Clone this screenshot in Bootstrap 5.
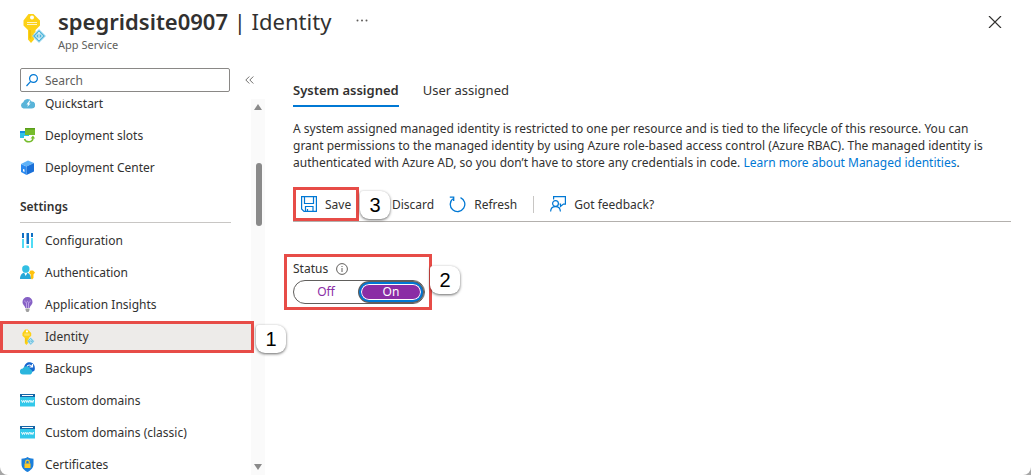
<!DOCTYPE html>
<html lang="en">
<head>
<meta charset="utf-8">
<meta name="viewport" content="width=device-width, initial-scale=1">
<title>spegridsite0907 | Identity</title>
<link href="https://cdn.jsdelivr.net/npm/bootstrap@5.3.0/dist/css/bootstrap.min.css" rel="stylesheet">
<script src="https://cdn.jsdelivr.net/npm/bootstrap@5.3.0/dist/js/bootstrap.bundle.min.js"></script>
<style>
  html { background: #a6a6a6; }
  body { font-family: "Noto Sans", "Open Sans", sans-serif; font-size: 12px; line-height: 17px; color: #323130; background: transparent; }
  svg { display: block; flex: none; }
  .blade { height: 100vh; background: #fff; border-radius: 0 0 8px 8px; overflow: hidden; }
  .blade-head { padding: 8px 29px 0 20px; height: 69px; }
  .blade-head h1 { font-size: 22px; line-height: 26px; font-weight: 400; }
  .blade-head h1 b { font-weight: 600; }
  .kind { font-size: 11px; line-height: 21px; color: #605e5c; }
  .plain { border: 0; background: none; padding: 0; color: inherit; }
  .more { margin: 8px 0 0 23px; }
  .side { width: 265px; flex: none; }
  .lower { min-height: 0; }
  .search-row { padding: 0 11px 0 20px; height: 31px; background: #fff; position: relative; z-index: 1; }
  .search-box { width: 210px; height: 24px; border: 1px solid #8a8886; border-radius: 2px; padding: 0 5px; gap: 7px; }
  .search-box input { border: 0; outline: 0; padding: 0; min-width: 0; flex: 1; color: #323130; }
  .search-box input::placeholder { color: #605e5c; opacity: 1; }
  .menu { min-width: 0; }
  .menu ul { list-style: none; margin: 0; padding: 0; }
  .menu ul:first-child { margin-top: -11px; }
  .menu a { display: flex; align-items: center; gap: 10px; height: 32px; padding-left: 20px; color: inherit; text-decoration: none; position: relative; }
  .menu a.active { background: #edebe9; }
  .menu h2 { font-size: 12px; line-height: 17px; font-weight: 600; margin: 14px 20px 2px 20px; padding-bottom: 7px; border-bottom: 1px solid #c8c6c4; }
  .track { width: 14px; background: #fafafa; padding: 5px 0 5px; }
  .thumb { width: 6px; height: 63px; border-radius: 3px; background: #8a8a8a; margin: 53px 0 auto 1px; }
  .content-pane { padding: 11px 20px 0 28px; min-width: 0; }
  .tab-strip { gap: 24px; border: 0; }
  .tab-strip button { font-size: 13px; padding: 2px 0 5px; line-height: 17px; border-bottom: 2px solid transparent; height: 28px; }
  .tab-strip button.active { font-weight: 600; border-color: #0078d4; }
  .about { margin: 13px 0 0; }
  .about a { color: #0078d4; text-decoration: none; }
  .tools { height: 35px; margin-top: 16px; border-bottom: 1px solid #b3b0ad; }
  .tools button { display: flex; align-items: center; gap: 8px; height: 34px; position: relative; }
  .save { width: 66px; padding-left: 8px; }
  .discard { margin-left: 11px; padding-left: 22px; }
  .refresh { margin-left: 15px; }
  .rule { width: 1px; height: 17px; background: #c8c6c4; margin: 0 16px; }
  .hilite::before { content: ""; position: absolute; inset: 0; border: 3px solid #e74c47; pointer-events: none; }
  .menu .hilite::before { inset: 0 -3px 0 0; }
  .callout-no { position: absolute; width: 30px; height: 28px; background: #fff; border-radius: 3px 9px 9px 9px; box-shadow: 0 1px 3px rgba(0,0,0,.6); font: 20px/28px "Liberation Sans", Arial, sans-serif; text-align: center; color: #000; z-index: 2; }
  .callout-one { left: 256px; top: 4px; }
  .callout-two { left: 146px; top: 12px; }
  .callout-three { left: 67px; top: 4px; }
  .status { position: relative; width: 148px; height: 56px; margin: 32px 0 0 -9px; padding: 6px 7px 0 9px; border: 0; }
  .status legend { float: none; width: auto; font-size: 12px; line-height: 17px; margin: 0; }
  .switch-pill { width: 132px; height: 24px; margin-top: 3px; border: 1px solid #605e5c; border-radius: 12px; }
  .switch-pill label { flex: 1; text-align: center; line-height: 18px; color: #8a2da5; border-radius: 10px; margin: 1px; border: 1px solid transparent; cursor: pointer; }
  .switch-pill input:checked + label { background: #8a2da5; color: #fff; border: 2px solid #0078d4; box-shadow: inset 0 0 0 1px #fff, 0 0 0 1px #605e5c; line-height: 16px; }
</style>
</head>
<body>
<svg width="0" height="0" class="position-absolute" aria-hidden="true">
  <defs>
    <symbol id="key" viewBox="0 0 26 30">
      <path fill="#fcd116" d="M8.500 1h5L20 7.500v5L15.500 17v2l-2 2 2 2-2 2 1 1-3.500 4L8 26.500V17L3.500 12.500v-5z"/>
      <path fill="#e8b400" d="M9.500 17h1v9l-1-1z"/><circle cx="12" cy="4.500" r="2" fill="#fff"/>
      <path stroke="#fff" stroke-opacity=".75" d="M7 9.500h10M7 11.500h10"/>
      <path fill="#50b5d9" stroke="#b5e3f5" d="M19 16.500l6.500 6.500-6.500 6.500-6.500-6.500z"/>
      <path fill="none" stroke="#fff" d="M19 19v8M15.500 23l3.500-3.500 3.500 3.500-3.500 3.500z"/>
    </symbol>
    <symbol id="www" viewBox="0 0 15 13">
      <path fill="#32c8ea" d="M0 3h15v9.500H0z"/><path fill="#1565a7" d="M0 0h15v3H0z"/><path stroke="#fff" d="M2 1.500h11"/>
      <path fill="none" stroke="#fff" stroke-width=".9" d="M1.500 6l1 2.500 1-2 1 2 .8-2.500M5.800 6l.9 2.500 1-2 1 2 .8-2.500M10 6l1 2.500.9-2 .9 2 .9-2.500"/>
    </symbol>
  </defs>
</svg>
<div class="blade d-flex flex-column">
  <header class="blade-head d-flex align-items-start">
    <svg class="mt-1" width="26" height="32"><use href="#key"/></svg>
    <div class="ms-2 ps-1">
      <h1 class="mb-0"><b>spegridsite0907</b> | Identity</h1>
      <div class="kind">App Service</div>
    </div>
    <button class="plain more" type="button" aria-label="More"><svg width="16" height="8" fill="#605e5c"><circle cx="3.500" cy="4.500" r="1"/><circle cx="8" cy="4.500" r="1"/><circle cx="12.500" cy="4.500" r="1"/></svg></button>
    <button class="plain ms-auto mt-2" type="button" aria-label="Close"><svg width="14" height="12" stroke="#323130" stroke-width="1.200"><path d="M1 0l12 12M13 0L1 12"/></svg></button>
  </header>
  <div class="lower d-flex flex-grow-1">
    <aside class="side d-flex flex-column">
      <div class="search-row d-flex align-items-start justify-content-between">
        <div class="search-box d-flex align-items-center">
          <svg width="12" height="13" fill="none" stroke="#0078d4" stroke-width="1.200"><circle cx="7.500" cy="4.500" r="3.900"/><path d="M4.700 7.400L.5 12"/></svg>
          <input type="search" placeholder="Search" aria-label="Search">
        </div>
        <button class="plain mt-2" type="button" aria-label="Collapse menu"><svg width="9" height="8" fill="none" stroke="#605e5c" stroke-width=".9"><path d="M4.300.5L.8 4l3.500 3.500M8.300.5L4.800 4l3.500 3.500"/></svg></button>
      </div>
      <div class="lower d-flex flex-grow-1">
        <nav class="menu flex-grow-1" aria-label="Resource menu">
          <ul>
            <li><a href="#"><svg width="15" height="15"><path fill="#59b4d9" d="M3.500 12.500a3.300 3.300 0 01-.3-6.300A4.500 4.500 0 0111.500 5.500a3.500 3.500 0 01.3 7z"/><path fill="#fff" d="M9.500 4.500L6.500 8.500h1.700L7.200 11l3.400-3.500H8.900L10.500 4.500z"/></svg>Quickstart</a></li>
            <li><a href="#"><svg width="15" height="15"><path fill="#32c3e6" d="M0 3h9v7H0z"/><path fill="#1490df" d="M0 3h9v2H0z"/><path fill="#76bc2d" d="M5 0h10v7H5z"/><path fill="#5a9e1a" d="M5 0h10v1.500H5z"/><path fill="#fff" d="M4 10v-2h11v2z"/><path fill="none" stroke="#76bc2d" stroke-width="1.500" d="M4.500 11c1.500 4 8.500 4 8.500-1.500"/><path fill="#76bc2d" d="M10.500 10.500L13 7.500l2 3z"/></svg>Deployment slots</a></li>
            <li><a href="#"><svg width="15" height="15"><path fill="#2b8af0" d="M1 4l5.500 2.500V15L1 12z"/><path fill="#5eb2f8" d="M1 4l7-3.500L14 3 6.500 6.500z"/><path fill="#1a70d8" d="M6.500 6.500L14 3v8.500L6.500 15z"/><path fill="#fff" d="M3 9l1.500.6V12L3 11.300z"/></svg>Deployment Center</a></li>
          </ul>
          <h2>Settings</h2>
          <ul>
            <li><a href="#"><svg width="15" height="16"><path fill="#0f70c4" d="M2 0h2v5H2zM6.500 0h2.500v11H6.500zM11 0h2v4h-2z"/><path fill="#50dcf5" d="M2 6h2v9H2zM6.500 12.500h2.500V15H6.500zM11 5h2v10h-2z"/></svg>Configuration</a></li>
            <li><a href="#"><svg width="15" height="15"><path fill="#25a8d8" d="M0 14c0-4 2-6.500 5.500-6.500S11 10 11 14z"/><path fill="#fff" d="M4 7.500h3.500L5.700 11z"/><circle cx="5.800" cy="4" r="3.700" fill="#32bfe3"/><path fill="#ffc20e" d="M10.500 5.500h2.500L15 7.500 13.500 9.500V13l-1.500 1.500-1.300-1.300V9.500L9 8z"/></svg>Authentication</a></li>
            <li><a href="#"><svg width="15" height="15"><path fill="#8661c5" d="M7.500 0A5 5 0 0112.500 5c0 3-2.500 3.500-2.800 6H5.300C5 8.500 2.500 8 2.500 5a5 5 0 015-5z"/><path fill="none" stroke="#c9b0ee" stroke-width=".8" d="M6.500 11V6M8.500 11V6M4.800 3.500c0 2.500 2.200 2.500 2.200 1.500s1-1 1 0 2.200 1 2.200-1.500"/><path fill="#a0a0a0" d="M5.500 11.500h4V13l-1 2h-2l-1-2z"/></svg>Application Insights</a></li>
            <li><a class="active hilite" href="#" aria-current="page"><svg width="15" height="16"><use href="#key"/></svg>Identity<span class="callout-no callout-one">1</span></a></li>
            <li><a href="#"><svg width="15" height="15"><path fill="#1565cf" d="M4 7C4.500 2.500 8 .5 11 1.500c3.500 1 4.500 5 3.500 8-1 1.500-3 1.500-5 1.500z"/><path fill="none" stroke="#fff" stroke-width="1.200" d="M7 5.500c1-2 3.500-2 5 0M12.500 3v3H9.500"/><path fill="#2bb5dd" d="M3 13.500a3 3 0 01-.2-6 4 4 0 017.400.5 2.900 2.900 0 01.3 5.500z"/></svg>Backups</a></li>
            <li><a href="#"><svg width="15" height="13"><use href="#www"/></svg>Custom domains</a></li>
            <li><a href="#"><svg width="15" height="13"><use href="#www"/></svg>Custom domains (classic)</a></li>
            <li><a href="#"><svg width="15" height="15"><path fill="#1b7fdc" d="M7.500 0C9 1.200 11 1.700 13.500 1.700V7c0 4-3 6.500-6 8-3-1.500-6-4-6-8V1.700C4 1.700 6 1.200 7.500 0z"/><path fill="#ffca28" d="M4.500 6.500h6V11h-6z"/><path fill="none" stroke="#ffca28" stroke-width="1.200" d="M5.700 6.500V5a1.800 1.800 0 013.600 0v1.500"/></svg>Certificates</a></li>
          </ul>
        </nav>
        <div class="track d-flex flex-column align-items-center" aria-hidden="true">
          <svg width="8" height="6" fill="#8a8a8a"><path d="M4 0l4 6H0z"/></svg>
          <div class="thumb"></div>
          <svg width="8" height="6" fill="#8a8a8a"><path d="M0 0h8L4 6z"/></svg>
        </div>
      </div>
    </aside>
    <main class="content-pane flex-grow-1">
      <div class="tab-strip d-flex" role="tablist">
        <button class="plain active" type="button" role="tab" aria-selected="true">System assigned</button>
        <button class="plain" type="button" role="tab" aria-selected="false">User assigned</button>
      </div>
      <p class="about">A system assigned managed identity is restricted to one per resource and is tied to the lifecycle of this resource. You can<br>grant permissions to the managed identity by using Azure role-based access control (Azure RBAC). The managed identity is<br>authenticated with Azure AD, so you don’t have to store any credentials in code. <a href="#">Learn more about Managed identities</a>.</p>
      <div class="tools d-flex align-items-center" role="toolbar">
        <button class="plain save hilite" type="button"><svg width="16" height="16" fill="none" stroke="#0078d4" stroke-width="1.200"><path d="M.6.600h14.800v14.800H3L.6 13zM3.500.6v6.900h9V.6M4.500 15.400v-4.900h7.500v4.900M6.500 13v2.400"/></svg>Save<span class="callout-no callout-three">3</span></button>
        <button class="plain discard" type="button">Discard</button>
        <button class="plain refresh" type="button"><svg width="17" height="17" fill="none" stroke="#0078d4" stroke-width="1.300"><path d="M11.500 1.600A7.300 7.300 0 113.800 2.700M.8 1.200h3.900v3.900"/></svg>Refresh</button>
        <div class="rule"></div>
        <button class="plain" type="button"><svg width="16" height="16" fill="none" stroke="#0078d4" stroke-width="1.200"><circle cx="5.500" cy="7.500" r="2.900"/><path d="M.6 15.500c.3-6.500 9.500-6.500 9.800 0M3.600 3.500V.6h11.800v7.500h-2L10.500 10.500V8.100H9.500"/></svg>Got feedback?</button>
      </div>
      <fieldset class="status hilite">
        <div class="d-flex align-items-center gap-2"><legend id="status-name">Status</legend>
          <svg width="12" height="12" fill="none" stroke="#605e5c"><circle cx="6" cy="6" r="5.400"/><path d="M6 5v4M6 3v1"/></svg></div>
        <div class="switch-pill d-flex" role="radiogroup" aria-labelledby="status-name">
          <input class="btn-check" type="radio" name="status" id="off"><label for="off">Off</label>
          <input class="btn-check" type="radio" name="status" id="on" checked><label for="on">On</label>
        </div>
        <span class="callout-no callout-two">2</span>
      </fieldset>
    </main>
  </div>
</div>
</body>
</html>
